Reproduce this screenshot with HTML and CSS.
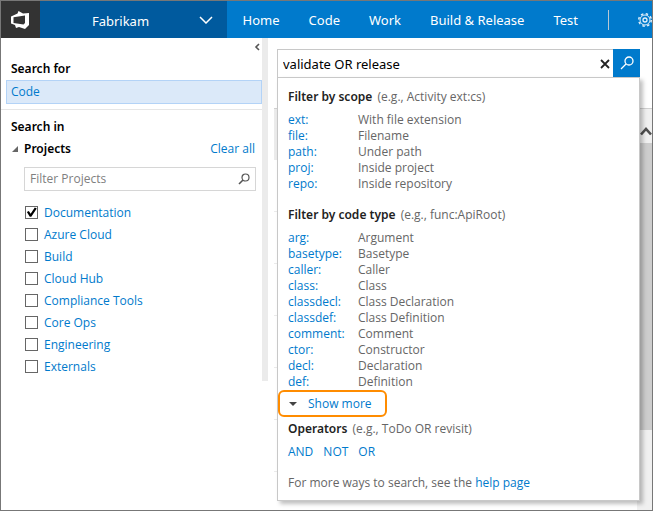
FILE: index.html
```html
<!DOCTYPE html>
<html lang="en">
<head>
<meta charset="utf-8">
<title>Fabrikam - Code search</title>
<link rel="stylesheet" href="styles.css">
</head>
<body>
<div class="app">
  <header class="topbar">
    <a class="logo" href="#" aria-label="Home page">
      <svg width="20" height="20" viewBox="0 0 20 20"><path fill="#fff" fill-rule="evenodd" d="M1 6.500 7.500 3.500 8.500 1 13 3.500 19 3 19 15 15 19 9 17 6 18 5 15 1 13.500ZM3.500 7.200 3.500 13 13.500 14.500 15 13 15 5.500Z"/></svg>
    </a>
    <button class="account" type="button">
      <span class="account-name">Fabrikam</span>
      <svg width="14" height="8" viewBox="0 0 14 8"><path d="M1 1 7 7 13 1" fill="none" stroke="#fff" stroke-width="1.500"/></svg>
    </button>
    <nav class="tabs">
      <a href="#">Home</a>
      <a href="#">Code</a>
      <a href="#">Work</a>
      <a href="#">Build &amp; Release</a>
      <a href="#">Test</a>
    </nav>
    <span class="divider"></span>
    <button class="gear" type="button" aria-label="Settings">
      <svg width="14" height="14" viewBox="0 0 14 14" fill="none" stroke="#e6f2fb"><circle cx="7" cy="7" r="5"/><circle cx="7" cy="7" r="6.300" stroke-width="1.400" stroke-dasharray="2.474 2.474"/><circle cx="7" cy="7" r="2" stroke-width="1.300"/></svg>
    </button>
  </header>
  <div class="body">
    <aside class="sidebar">
      <button class="collapse" type="button" aria-label="Collapse pane">
        <svg width="6" height="8" viewBox="0 0 6 8"><path d="M5 1 2 4 5 7" fill="none" stroke="#555" stroke-width="1.600"/></svg>
      </button>
      <h2>Search for</h2>
      <a class="entity" href="#">Code</a>
      <hr>
      <h2>Search in</h2>
      <div class="group">
        <svg width="6" height="6" viewBox="0 0 6 6"><path d="M6 0V6H0Z" fill="#666"/></svg>
        <h3>Projects</h3>
        <a href="#">Clear all</a>
      </div>
      <div class="filter">
        <input type="text" placeholder="Filter Projects" aria-label="Filter Projects">
        <svg width="12" height="12" viewBox="0 0 12 12" fill="none" stroke="#555"><circle cx="7.500" cy="4.500" r="3.500" stroke-width="1.200"/><path d="M5 7 1 11" stroke-width="1.600"/></svg>
      </div>
      <div class="projects">
        <label><input type="checkbox" checked><span>Documentation</span></label>
        <label><input type="checkbox"><span>Azure Cloud</span></label>
        <label><input type="checkbox"><span>Build</span></label>
        <label><input type="checkbox"><span>Cloud Hub</span></label>
        <label><input type="checkbox"><span>Compliance Tools</span></label>
        <label><input type="checkbox"><span>Core Ops</span></label>
        <label><input type="checkbox"><span>Engineering</span></label>
        <label><input type="checkbox"><span>Externals</span></label>
      </div>
    </aside>
    <main class="main">
      <form class="search">
        <input type="text" value="validate OR release" aria-label="Search">
        <button class="clear" type="button" aria-label="Clear">
          <svg width="12" height="12" viewBox="0 0 12 12"><path d="M2 2 10 10M10 2 2 10" stroke="#222" stroke-width="1.800"/></svg>
        </button>
        <button class="go" type="button" aria-label="Search">
          <svg width="14" height="14" viewBox="0 0 14 14" fill="none" stroke="#fff" stroke-width="1.300"><circle cx="9" cy="5" r="4"/><path d="M6 8 1 13"/></svg>
        </button>
        <div class="help">
          <h4>Filter by scope <span>(e.g., Activity ext:cs)</span></h4>
          <dl>
            <dt><a href="#">ext:</a></dt><dd>With file extension</dd>
            <dt><a href="#">file:</a></dt><dd>Filename</dd>
            <dt><a href="#">path:</a></dt><dd>Under path</dd>
            <dt><a href="#">proj:</a></dt><dd>Inside project</dd>
            <dt><a href="#">repo:</a></dt><dd>Inside repository</dd>
          </dl>
          <h4 class="second">Filter by code type <span>(e.g., func:ApiRoot)</span></h4>
          <dl>
            <dt><a href="#">arg:</a></dt><dd>Argument</dd>
            <dt><a href="#">basetype:</a></dt><dd>Basetype</dd>
            <dt><a href="#">caller:</a></dt><dd>Caller</dd>
            <dt><a href="#">class:</a></dt><dd>Class</dd>
            <dt><a href="#">classdecl:</a></dt><dd>Class Declaration</dd>
            <dt><a href="#">classdef:</a></dt><dd>Class Definition</dd>
            <dt><a href="#">comment:</a></dt><dd>Comment</dd>
            <dt><a href="#">ctor:</a></dt><dd>Constructor</dd>
            <dt><a href="#">decl:</a></dt><dd>Declaration</dd>
            <dt><a href="#">def:</a></dt><dd>Definition</dd>
          </dl>
          <button class="more" type="button">
            <svg width="8" height="4" viewBox="0 0 8 4"><path d="M0 0H8L4 4Z" fill="#444"/></svg>
            <span>Show more</span>
          </button>
          <h4>Operators <span>(e.g., ToDo OR revisit)</span></h4>
          <div class="operators"><a href="#">AND</a><a href="#">NOT</a><a href="#">OR</a></div>
          <p>For more ways to search, see the <a href="#">help page</a></p>
        </div>
      </form>
      <div class="results">
        <div class="rows">
          <div class="row selected"></div>
          <div class="row"></div>
          <div class="row"></div>
          <div class="row"></div>
          <div class="row"></div>
          <div class="row"></div>
          <div class="row"></div>
        </div>
        <div class="scrollbar">
          <div class="scroll-up"><svg width="12" height="10" viewBox="0 0 12 10"><path d="M1 8.500 6 3 11 8.500" fill="none" stroke="#505050" stroke-width="2.600"/></svg></div>
          <div class="thumb"></div>
        </div>
      </div>
    </main>
  </div>
</div>
</body>
</html>
```
FILE: styles.css
```css
* { box-sizing: border-box; }

body {
  margin: 0;
  font: 12px/16px "Open Sans", "Noto Sans", sans-serif;
  color: #666;
  background: #fff;
}

a { color: #007acc; text-decoration: none; }
h2, h3, h4, p, dl, dd { margin: 0; }
h2, h3, h4 { font: 600 12px/16px "Noto Sans", sans-serif; color: #000; }
button { margin: 0; padding: 0; border: 0; background: none; font: inherit; }
svg { display: block; flex: none; }
input { font: inherit; }

.app {
  display: flex;
  flex-direction: column;
  min-height: 100vh;
  border: 1px solid #777;
  overflow: hidden;
}

/* Top bar */
.topbar {
  display: flex;
  align-items: center;
  height: 37px;
  background: #007acc;
  color: #fff;
  font-family: "Noto Sans", sans-serif;
  font-size: 13px;
}
.logo {
  display: flex;
  align-items: center;
  justify-content: center;
  width: 39px;
  height: 100%;
  background: #333;
}
.account {
  display: flex;
  align-items: center;
  width: 187px;
  height: 100%;
  padding: 0 14px 0 52px;
  background: #005a9e;
  color: #fff;
}
.account-name { flex: 1; padding-top: 3px; text-align: left; }
.tabs { display: flex; gap: 29px; padding: 0 30px 0 16px; white-space: nowrap; }
.tabs a { color: #fff; }
.divider { width: 1px; height: 20px; background: #b8c8d4; }
.gear { margin-left: 29px; }

/* Sidebar */
.body { display: flex; flex: 1; align-items: stretch; }
.sidebar {
  align-self: flex-start;
  flex: none;
  width: 267px;
  border-right: 6px solid #ebebeb;
  padding-bottom: 4px;
}
.collapse { display: block; margin: 5px 2px 10px auto; }
.sidebar h2 { padding-left: 10px; }
.entity {
  display: block;
  margin: 3px 0 5px 5px;
  padding: 3px 4px;
  border: 1px solid #b3d3f7;
  background: #dbe9f9;
}
.sidebar hr { margin: 0 0 9px; border: 0; border-top: 1px solid #e6e6e6; }
.group { display: flex; align-items: center; padding: 6px 7px 0 11px; }
.group h3 { flex: 1; padding-left: 6px; }
.filter {
  display: flex;
  align-items: center;
  height: 24px;
  margin: 10px 6px 10px 23px;
  padding: 0 5px;
  border: 1px solid #d6d6d6;
}
.filter input { flex: 1; min-width: 0; padding: 0; border: 0; outline: 0; background: none; }
.filter input::placeholder { color: #808080; opacity: 1; }
.projects label {
  display: flex;
  align-items: center;
  gap: 6px;
  height: 22px;
  padding-left: 24px;
  color: #007acc;
}
.projects span { padding-top: 2px; }
.projects input {
  appearance: none;
  width: 13px;
  height: 13px;
  margin: 0;
  border: 1px solid #666;
  background: #fff;
}
.projects input:checked::before {
  content: "";
  display: block;
  width: 11px;
  height: 11px;
  background: #000;
  clip-path: polygon(8% 50%, 26% 42%, 42% 65%, 80% 8%, 98% 18%, 48% 94%, 34% 94%);
}

/* Search box */
.main { display: flex; flex: 1; flex-direction: column; min-width: 0; }
.search {
  position: relative;
  z-index: 1;
  display: flex;
  align-items: center;
  height: 28px;
  margin: 11px 12px 31px 9px;
  border: 1px solid #c8c8c8;
  border-width: 1px 0 0 1px;
}
.search > input {
  flex: 1;
  min-width: 0;
  padding: 0 5px;
  border: 0;
  outline: 0;
  color: #000;
  font-family: "Noto Sans", sans-serif;
  font-size: 13px;
}
.clear { margin-right: 2px; }
.go {
  display: flex;
  align-items: center;
  justify-content: center;
  align-self: stretch;
  width: 27px;
  margin-top: -1px;
  background: #007acc;
}

/* Search help drop-down */
.help {
  position: absolute;
  top: 100%;
  left: -1px;
  right: 0;
  padding: 11px 10px 9px;
  border: 1px solid #c8c8c8;
  background: #fff;
  box-shadow: 3px 3px 4px rgba(0, 0, 0, 0.25);
}
.help h4 { color: #222; }
.help h4 span { padding-left: 2px; font-family: "Open Sans", sans-serif; font-weight: 400; color: #666; }
.help h4.second { padding-top: 15px; }
.help dl { display: grid; grid-template-columns: 70px 1fr; padding-top: 7px; }
.more {
  display: flex;
  align-items: center;
  gap: 11px;
  height: 27px;
  margin: 0 0 4px -10px;
  padding: 0 13px 0 9px;
  border: 2px solid #ff8c00;
  border-radius: 6px;
  color: #007acc;
}
.operators { display: flex; gap: 10px; padding-top: 7px; }
.help p { padding-top: 15px; }

/* Results behind the drop-down */
.results { display: flex; flex: 1; padding-left: 6px; }
.rows { flex: 1; }
.row { height: 52px; border-bottom: 1px solid #ebebeb; }
.row.selected { border-top: 1px solid #d0d0d0; background: #ebebeb; }
.scrollbar { display: flex; flex-direction: column; width: 15px; background: #f0f0f0; }
.scroll-up {
  display: flex;
  align-items: center;
  justify-content: flex-end;
  height: 35px;
  padding-top: 9px;
  border-top: 1px solid #d0d0d0;
}
.thumb { flex: 0 1 287px; background: #cdcdcd; }
```
